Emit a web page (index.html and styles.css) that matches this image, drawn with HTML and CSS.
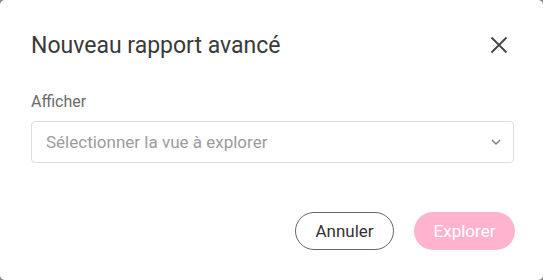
FILE: index.html
```html
<!DOCTYPE html>
<html lang="fr">
<head>
<meta charset="utf-8">
<link rel="stylesheet" href="styles.css">
</head>
<body>
<div class="dialog">
  <div class="header">
    <h1 class="title">Nouveau rapport avancé</h1>
    <button class="close" aria-label="Fermer">
      <svg width="18" height="18" viewBox="0 0 18 18"><path d="M1.5 1.5 L16.5 16.5 M16.5 1.5 L1.5 16.5" stroke="#444" stroke-width="1.8" fill="none"/></svg>
    </button>
  </div>
  <div class="field">
    <label class="label">Afficher</label>
    <div class="select">
      <span class="placeholder">Sélectionner la vue à explorer</span>
      <svg class="chevron" width="10" height="6" viewBox="0 0 10 6"><path d="M1 1 L5 5 L9 1" stroke="#777" stroke-width="1.3" fill="none"/></svg>
    </div>
  </div>
  <div class="actions">
    <button class="btn btn-outline">Annuler</button>
    <button class="btn btn-primary">Explorer</button>
  </div>
</div>
</body>
</html>
```
FILE: styles.css
```css
html, body { margin: 0; padding: 0; }
body {
  background: #8a8a8a;
  width: 543px;
  height: 280px;
  font-family: Roboto, "Noto Sans", sans-serif;
}
.dialog {
  box-sizing: border-box;
  width: 543px;
  height: 280px;
  background: #fff;
  border-radius: 5px;
  padding: 30px 29px 0 31px;
  display: flex;
  flex-direction: column;
}
.header {
  display: flex;
  align-items: center;
  justify-content: space-between;
  height: 30px;
}
.title {
  margin: 0;
  font-weight: 400;
  font-size: 23px;
  color: #3a3a3a;
  line-height: 30px;
  margin-top: 1px;
}
.close {
  border: 0;
  background: none;
  padding: 0;
  width: 18px;
  height: 18px;
  margin-right: 6px;
  display: flex;
}
.field {
  margin-top: 32px;
  display: flex;
  flex-direction: column;
}
.label {
  font-size: 16px;
  color: #6b6b6b;
  line-height: 19px;
}
.select {
  margin-top: 10px;
  box-sizing: border-box;
  height: 42px;
  border: 1px solid #dcdcdc;
  border-radius: 4px;
  display: flex;
  align-items: center;
  justify-content: space-between;
  padding: 0 12px 0 14px;
}
.placeholder {
  font-size: 17px;
  color: #9c9c9c;
}
.actions {
  margin-top: 49px;
  display: flex;
  justify-content: flex-end;
  gap: 20px;
  margin-right: -1px;
}
.btn {
  box-sizing: border-box;
  height: 38px;
  border-radius: 19px;
  font-family: Roboto, "Noto Sans", sans-serif;
  font-size: 17px;
  padding: 0;
}
.btn-outline {
  width: 99px;
  background: #fff;
  border: 1px solid #666;
  color: #333;
}
.btn-primary {
  width: 101px;
  background: #ffb3cf;
  border: 0;
  color: #fff;
}
```
